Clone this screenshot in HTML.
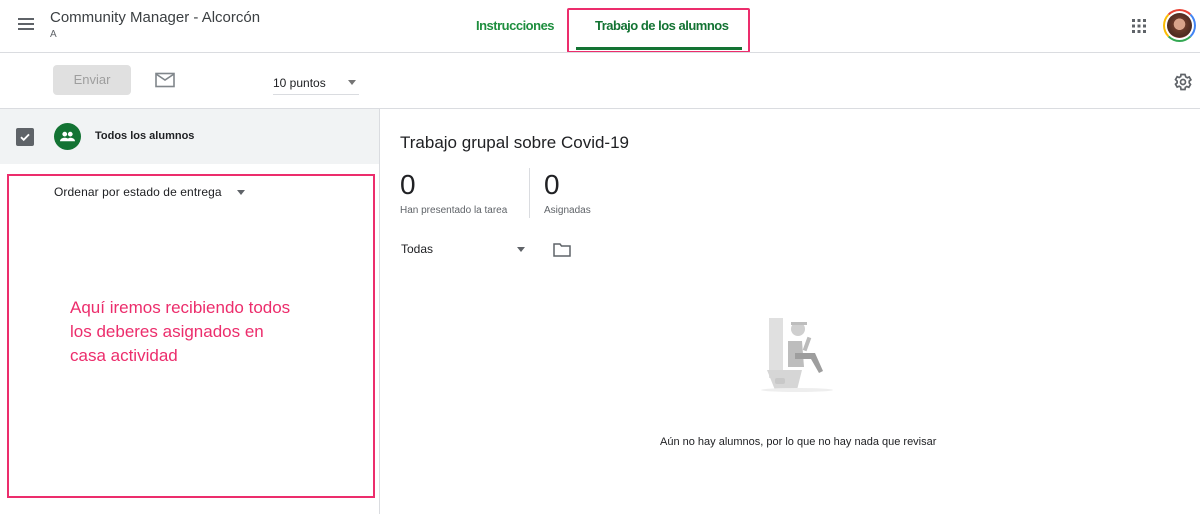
<!DOCTYPE html>
<html><head><meta charset="utf-8"><style>
*{margin:0;padding:0;box-sizing:border-box}
body{width:1200px;height:514px;overflow:hidden;background:#fff;font-family:"Liberation Sans",Arial,sans-serif;color:#202124;position:relative}
.a{position:absolute}
</style></head><body>
<div class="a" style="left:18px;top:18px;width:16px;height:2px;background:#5f6368;box-shadow:0 5px 0 #5f6368,0 10px 0 #5f6368"></div>
<div class="a" style="left:50px;top:9px;font-size:15px;color:#3c4043">Community Manager - Alcorcón</div>
<div class="a" style="left:50px;top:29px;font-size:10px;color:#5f6368">A</div>
<div class="a" style="left:476px;top:18px;font-size:13px;color:#1e8e3e;font-weight:bold;letter-spacing:-0.5px">Instrucciones</div>
<div class="a" style="left:595px;top:18px;font-size:13px;color:#137333;font-weight:bold;letter-spacing:-0.5px">Trabajo de los alumnos</div>
<div class="a" style="left:576px;top:47px;width:166px;height:3px;background:#137333"></div>
<div class="a" style="left:567px;top:8px;width:183px;height:45px;border:2px solid #ec2d6c;border-radius:2px"></div>
<svg class="a" style="left:1131px;top:18px" width="16" height="16" viewBox="0 0 16 16" fill="#5f6368"><rect x="1" y="1" width="3" height="3"/><rect x="6.5" y="1" width="3" height="3"/><rect x="12" y="1" width="3" height="3"/><rect x="1" y="6.5" width="3" height="3"/><rect x="6.5" y="6.5" width="3" height="3"/><rect x="12" y="6.5" width="3" height="3"/><rect x="1" y="12" width="3" height="3"/><rect x="6.5" y="12" width="3" height="3"/><rect x="12" y="12" width="3" height="3"/></svg>
<div class="a" style="left:1163px;top:9px;width:33px;height:33px;border-radius:50%;border:2px solid;border-color:#ea4335 #4285f4 #34a853 #fbbc05;background:#fff;padding:2px"><div style="width:100%;height:100%;border-radius:50%;background:radial-gradient(circle at 50% 45%,#d9a38a 0 30%,#6b3a2a 32%,#4a2a20 70%,#9e3b3b 71%)"></div></div>
<div class="a" style="left:0;top:52px;width:1200px;height:1px;background:#dadce0"></div>
<div class="a" style="left:53px;top:65px;width:78px;height:30px;background:#e0e0e0;border-radius:4px;color:#9e9e9e;font-size:13px;text-align:center;line-height:30px">Enviar</div>
<svg class="a" style="left:155px;top:72px" width="20" height="16" viewBox="0 0 20 16" fill="none" stroke="#80868b" stroke-width="1.6"><rect x="1" y="1.5" width="18" height="13"/><path d="M1 2l9 6 9-6"/></svg>
<div class="a" style="left:273px;top:76px;font-size:12px;color:#202124">10 puntos</div>
<div class="a" style="left:348px;top:80px;border:4px solid transparent;border-top:5px solid #757575"></div>
<div class="a" style="left:273px;top:94px;width:86px;height:1px;background:#dadce0"></div>
<svg class="a" style="left:1173px;top:72px" width="20" height="20" viewBox="0 0 24 24"><path d="M19.4 13a7.5 7.5 0 000-2l2.1-1.6-2-3.5-2.5 1a7 7 0 00-1.7-1L14.4 3h-4.8l-.4 2.6a7 7 0 00-1.7 1l-2.5-1-2 3.5L5 11a7.5 7.5 0 000 2l-2 1.6 2 3.5 2.5-1a7 7 0 001.7 1l.4 2.9h4.8l.4-2.6a7 7 0 001.7-1l2.5 1 2-3.5z" fill="none" stroke="#5f6368" stroke-width="2"/><circle cx="12" cy="12" r="3" fill="none" stroke="#5f6368" stroke-width="2"/></svg>
<div class="a" style="left:0;top:108px;width:1200px;height:1px;background:#dadce0"></div>
<div class="a" style="left:0;top:109px;width:379px;height:55px;background:#f1f3f4"></div>
<div class="a" style="left:379px;top:109px;width:1px;height:405px;background:#dadce0"></div>
<div class="a" style="left:16px;top:128px;width:18px;height:18px;background:#5f6368;border-radius:2px"></div>
<svg class="a" style="left:18px;top:130px" width="14" height="14" viewBox="0 0 14 14"><path d="M3 7.2l2.7 2.6L11 4.4" stroke="#fff" stroke-width="1.8" fill="none"/></svg>
<div class="a" style="left:54px;top:123px;width:27px;height:27px;border-radius:50%;background:#137333"></div>
<svg class="a" style="left:58px;top:127px" width="19" height="19" viewBox="0 0 24 24" fill="#fff"><circle cx="8.5" cy="9" r="3"/><circle cx="15.5" cy="9" r="3"/><path d="M2.5 18c0-3 3-4.5 6-4.5s6 1.5 6 4.5zM11 18c.5-2.5 2-4.5 4.5-4.5 3 0 6 1.5 6 4.5z"/></svg>
<div class="a" style="left:95px;top:130px;font-size:11px;font-weight:bold;color:#202124">Todos los alumnos</div>
<div class="a" style="left:54px;top:185px;font-size:12px;color:#202124;letter-spacing:0.1px">Ordenar por estado de entrega</div>
<div class="a" style="left:237px;top:190px;border:4px solid transparent;border-top:5px solid #5f6368"></div>
<div class="a" style="left:7px;top:174px;width:368px;height:324px;border:2px solid #ec2d6c"></div>
<div class="a" style="left:70px;top:296px;font-size:17px;line-height:24px;color:#ec2d6c">Aquí iremos recibiendo todos<br>los deberes asignados en<br>casa actividad</div>
<div class="a" style="left:400px;top:133px;font-size:17px;color:#202124">Trabajo grupal sobre Covid-19</div>
<div class="a" style="left:400px;top:169px;font-size:28px;color:#202124">0</div>
<div class="a" style="left:400px;top:205px;font-size:10px;color:#5f6368">Han presentado la tarea</div>
<div class="a" style="left:529px;top:168px;width:1px;height:50px;background:#dadce0"></div>
<div class="a" style="left:544px;top:169px;font-size:28px;color:#202124">0</div>
<div class="a" style="left:544px;top:205px;font-size:10px;color:#5f6368">Asignadas</div>
<div class="a" style="left:401px;top:242px;font-size:12px;color:#202124">Todas</div>
<div class="a" style="left:517px;top:247px;border:4px solid transparent;border-top:5px solid #5f6368"></div>
<svg class="a" style="left:553px;top:242px" width="18" height="15" viewBox="0 0 18 15" fill="none" stroke="#5f6368" stroke-width="1.5"><path d="M1 2h6l1.5 2H17v10H1z"/></svg>
<svg class="a" style="left:755px;top:315px" width="85" height="80" viewBox="0 0 85 80">
<rect x="14" y="3" width="14" height="60" fill="#e0e0e0"/>
<path d="M12 55h35l-5 20H20z" fill="#d6d6d6"/>
<circle cx="43" cy="14" r="7" fill="#cfcfcf"/><path d="M36 10h16v-3h-16z" fill="#bdbdbd"/>
<path d="M33 26h14l2 26H33z" fill="#bdbdbd"/>
<path d="M40 38h20l8 18-4 2-8-14H40z" fill="#9e9e9e"/>
<rect x="50" y="22" width="4" height="14" fill="#bbb" transform="rotate(20 52 29)"/>
<ellipse cx="42" cy="75" rx="36" ry="2" fill="#eee"/>
<rect x="20" y="63" width="10" height="6" rx="2" fill="#c8c8c8"/>
</svg>
<div class="a" style="left:660px;top:436px;font-size:11px;color:#202124">Aún no hay alumnos, por lo que no hay nada que revisar</div>
</body></html>
